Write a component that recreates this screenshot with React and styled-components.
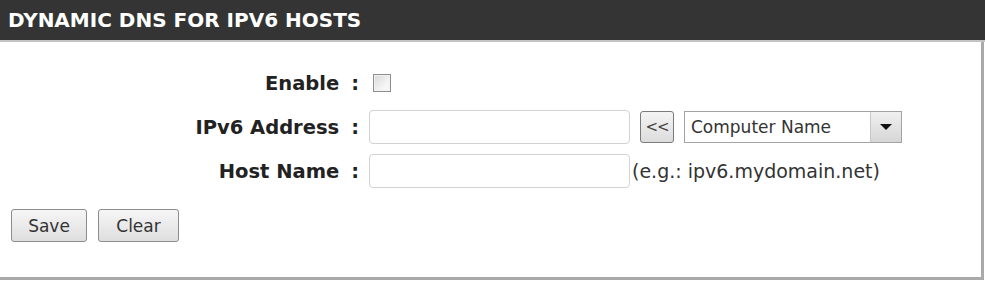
import React, { useState } from 'react';
import styled, { createGlobalStyle } from 'styled-components';

const GlobalStyle = createGlobalStyle`
  html, body {
    margin: 0;
    padding: 0;
    background: #ffffff;
  }
  body {
    font-family: "DejaVu Sans", Tahoma, sans-serif;
  }
`;

const Panel = styled.div`
  width: 985px;
  height: 280px;
  box-sizing: border-box;
  display: flex;
  flex-direction: column;
`;

const Header = styled.h2`
  margin: 0;
  height: 40px;
  background: #333433;
  border-bottom: 2px solid #c4c4c4;
  color: #ffffff;
  font-size: 20px;
  font-weight: bold;
  line-height: 40px;
  padding-left: 8px;
`;

const Body = styled.div`
  flex: 1;
  border-right: 3px solid #a9a9a9;
  border-bottom: 3px solid #a9a9a9;
  margin-right: 1px;
  padding: 19px 0 0 11px;
`;

const Form = styled.div`
  display: grid;
  grid-template-columns: 348px auto;
  grid-auto-rows: 44px;
  column-gap: 10px;
  align-items: center;
`;

const Label = styled.label`
  justify-self: end;
  font-size: 19.5px;
  font-weight: bold;
  color: #222;
`;

const Colon = styled.span`
  margin-left: 12px;
`;

const Controls = styled.div`
  display: flex;
  align-items: center;
`;

const Check = styled.span`
  width: 16px;
  height: 16px;
  margin-left: 4px;
  border: 1px solid #8e8e8e;
  background: linear-gradient(135deg, #d8d8d8, #f6f6f6 70%);
  box-shadow: inset 0 0 0 1px #f2f2f2;
  cursor: pointer;
`;

const TextInput = styled.input`
  width: 261px;
  height: 34px;
  box-sizing: border-box;
  border: 1px solid #d2d2d2;
  border-radius: 4px;
  padding: 0 6px;
  font-family: inherit;
  font-size: 16px;
  outline: none;
`;

const SmallButton = styled.button`
  width: 34px;
  height: 32px;
  margin-left: 10px;
  box-sizing: border-box;
  border: 1px solid #7a7a7a;
  border-radius: 3px;
  background: linear-gradient(#f4f4f4, #dcdcdc);
  color: #444;
  font-family: inherit;
  font-size: 15px;
  letter-spacing: -1px;
  padding: 0;
`;

const Select = styled.div`
  width: 218px;
  height: 32px;
  margin-left: 10px;
  box-sizing: border-box;
  border: 1px solid #a3a3a3;
  display: flex;
  align-items: stretch;
  background: #fff;
`;

const SelectText = styled.span`
  flex: 1;
  padding-left: 6px;
  font-size: 17px;
  line-height: 30px;
  color: #333;
`;

const SelectArrow = styled.span`
  width: 30px;
  display: flex;
  align-items: center;
  justify-content: center;
  background: linear-gradient(#f0f0f0, #d6d6d6);
  border-left: 1px solid #c8c8c8;
  &::after {
    content: '';
    border-left: 6px solid transparent;
    border-right: 6px solid transparent;
    border-top: 6px solid #111;
  }
`;

const Hint = styled.span`
  font-size: 19px;
  color: #333;
  margin-left: 2px;
`;

const Actions = styled.div`
  display: flex;
  gap: 11px;
  margin-top: 16px;
`;

const Button = styled.button`
  width: ${p => p.$w}px;
  height: 33px;
  box-sizing: border-box;
  border: 1px solid #8c8c8c;
  border-radius: 3px;
  background: linear-gradient(#f6f6f6, #dedede);
  font-family: inherit;
  font-size: 17px;
  color: #333;
  padding: 0;
`;

export default function App() {
  const [enabled, setEnabled] = useState(false);
  return (
    <>
      <GlobalStyle />
      <Panel>
        <Header>DYNAMIC DNS FOR IPV6 HOSTS</Header>
        <Body>
          <Form>
            <Label>Enable<Colon>:</Colon></Label>
            <Controls>
              <Check role="checkbox" aria-checked={enabled} onClick={() => setEnabled(!enabled)} />
            </Controls>

            <Label>IPv6 Address<Colon>:</Colon></Label>
            <Controls>
              <TextInput type="text" />
              <SmallButton>&lt;&lt;</SmallButton>
              <Select>
                <SelectText>Computer Name</SelectText>
                <SelectArrow />
              </Select>
            </Controls>

            <Label>Host Name<Colon>:</Colon></Label>
            <Controls>
              <TextInput type="text" />
              <Hint>(e.g.: ipv6.mydomain.net)</Hint>
            </Controls>
          </Form>
          <Actions>
            <Button $w={76}>Save</Button>
            <Button $w={81}>Clear</Button>
          </Actions>
        </Body>
      </Panel>
    </>
  );
}
